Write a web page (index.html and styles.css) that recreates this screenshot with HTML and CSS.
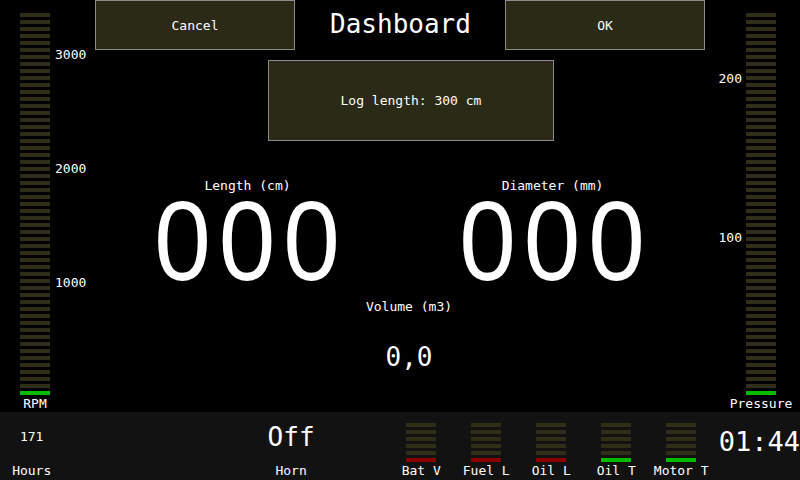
FILE: index.html
```html
<!DOCTYPE html>
<html>
<head>
<meta charset="utf-8">
<title>Dashboard</title>
<link rel="stylesheet" href="styles.css">
</head>
<body>
<div class="screen">
  <div class="main">
    <div class="side side-left">
      <div class="gauge">
        <div class="bar"><div class="stripes tall"></div><div class="level green"></div></div>
        <div class="gauge-label">RPM</div>
      </div>
      <div class="scale scale-rpm"><span>3000</span><span>2000</span><span>1000</span></div>
    </div>
    <div class="center">
      <div class="header">
        <div class="btn">Cancel</div>
        <div class="title">Dashboard</div>
        <div class="btn">OK</div>
      </div>
      <div class="log-box">Log length: 300 cm</div>
      <div class="readouts">
        <div class="readout">
          <div class="label">Length (cm)</div>
          <div class="big">000</div>
        </div>
        <div class="readout">
          <div class="label">Diameter (mm)</div>
          <div class="big">000</div>
        </div>
      </div>
      <div class="volume">
        <div class="label">Volume (m3)</div>
        <div class="volume-value">0,0</div>
      </div>
    </div>
    <div class="side side-right">
      <div class="scale scale-pressure"><span>200</span><span>100</span></div>
      <div class="gauge">
        <div class="bar"><div class="stripes tall"></div><div class="level green"></div></div>
        <div class="gauge-label">Pressure</div>
      </div>
    </div>
  </div>
  <div class="status">
    <div class="stat stat-hours">
      <div class="stat-value">171</div>
      <div class="stat-label">Hours</div>
    </div>
    <div class="stat stat-horn">
      <div class="stat-value large">Off</div>
      <div class="stat-label">Horn</div>
    </div>
    <div class="mini-gauges">
      <div class="mini">
        <div class="bar"><div class="stripes short"></div><div class="level red"></div></div>
        <div class="gauge-label">Bat V</div>
      </div>
      <div class="mini">
        <div class="bar"><div class="stripes short"></div><div class="level red"></div></div>
        <div class="gauge-label">Fuel L</div>
      </div>
      <div class="mini">
        <div class="bar"><div class="stripes short"></div><div class="level red"></div></div>
        <div class="gauge-label">Oil L</div>
      </div>
      <div class="mini">
        <div class="bar"><div class="stripes short"></div><div class="level green"></div></div>
        <div class="gauge-label">Oil T</div>
      </div>
      <div class="mini">
        <div class="bar"><div class="stripes short"></div><div class="level green"></div></div>
        <div class="gauge-label">Motor T</div>
      </div>
    </div>
    <div class="clock">01:44</div>
  </div>
</div>
</body>
</html>
```

FILE: styles.css
```css
* {
  box-sizing: border-box;
}

html, body {
  margin: 0;
  padding: 0;
  background: #000;
}

body {
  width: 800px;
  height: 480px;
  overflow: hidden;
  color: #fff;
  font-family: "DejaVu Sans Mono", "Liberation Mono", monospace;
  font-size: 13px;
}

.screen {
  width: 800px;
  height: 480px;
  display: flex;
  flex-direction: column;
}

.main {
  height: 412px;
  display: grid;
  grid-template-columns: 95px 610px 95px;
  background: #000;
}

/* side gauges */
.side {
  display: flex;
  align-items: flex-start;
}

.side-left {
  padding-left: 20px;
}

.side-right {
  justify-content: flex-end;
  padding-right: 24px;
}

.gauge {
  width: 30px;
  margin-top: 13px;
  display: flex;
  flex-direction: column;
}

.bar {
  width: 30px;
  display: flex;
  flex-direction: column;
}

.stripes {
  width: 30px;
  background: repeating-linear-gradient(to bottom, #2f2e19 0, #2f2e19 4px, transparent 4px, transparent 7px);
}

.stripes.tall {
  height: 378px;
}

.stripes.short {
  height: 35px;
}

.level {
  height: 4px;
}

.level.green {
  background: #00bb00;
}

.level.red {
  background: #8a0000;
}

.gauge-label {
  display: flex;
  justify-content: center;
  white-space: nowrap;
  line-height: 16px;
  margin-top: 1px;
}

.scale {
  display: flex;
  flex-direction: column;
  line-height: 14px;
}

.scale-rpm {
  margin-left: 5px;
  padding-top: 48px;
  gap: 100px;
}

.scale-pressure {
  margin-right: 4px;
  padding-top: 72px;
  gap: 145px;
  text-align: right;
}

/* center */
.center {
  display: flex;
  flex-direction: column;
}

.header {
  display: flex;
  height: 50px;
}

.btn {
  width: 200px;
  height: 50px;
  background: #2b2a16;
  border: 1px solid #8a8a8a;
  display: flex;
  align-items: center;
  justify-content: center;
}

.title {
  flex: 1;
  display: flex;
  align-items: center;
  justify-content: center;
  font-size: 26px;
  padding-bottom: 3px;
  padding-left: 1px;
}

.log-box {
  width: 286px;
  height: 81px;
  margin-top: 10px;
  margin-left: 173px;
  background: #2b2a16;
  border: 1px solid #8a8a8a;
  display: flex;
  align-items: center;
  justify-content: center;
}

.readouts {
  display: grid;
  grid-template-columns: 305px 305px;
  margin-top: 37px;
}

.readout {
  display: flex;
  flex-direction: column;
  align-items: center;
}

.label {
  line-height: 16px;
  white-space: nowrap;
}

.big {
  font-family: "Liberation Sans", Arial, sans-serif;
  font-size: 113px;
  line-height: 94px;
  letter-spacing: 8.9px;
  padding-left: 8.9px;
  transform: scaleX(0.9);
}

.volume {
  display: flex;
  flex-direction: column;
  align-items: center;
  margin-top: 11px;
  padding-left: 18px;
}

.volume-value {
  font-size: 26px;
  line-height: 30px;
  margin-top: 27px;
}

/* status bar */
.status {
  height: 68px;
  background: #121212;
  display: flex;
  align-items: flex-start;
}

.stat {
  display: flex;
  flex-direction: column;
  align-items: center;
}

.stat-hours {
  width: 64px;
}

.stat-horn {
  width: 80px;
  margin-left: 188px;
}

.stat-value {
  line-height: 16px;
  margin-top: 17px;
}

.stat-value.large {
  font-size: 26px;
  line-height: 30px;
  margin-top: 10px;
}

.stat-label {
  line-height: 16px;
  margin-top: 18px;
}

.stat-horn .stat-label {
  margin-top: 11px;
}

.mini-gauges {
  display: flex;
  margin-left: 58px;
}

.mini {
  width: 65px;
  display: flex;
  flex-direction: column;
  align-items: center;
}

.mini .bar {
  margin-top: 11px;
}

.clock {
  margin-left: 5px;
  margin-top: 15px;
  font-size: 27px;
  line-height: 30px;
  white-space: nowrap;
}
```
